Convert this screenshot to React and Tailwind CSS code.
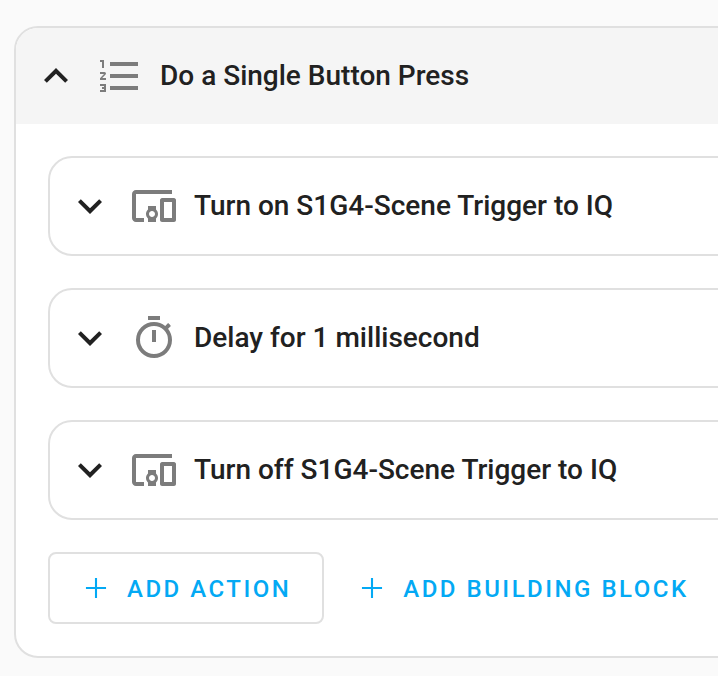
const paths = {
  listNumbered: 'M7,13V11H21V13H7M7,19V17H21V19H7M7,7V5H21V7H7M3,8V5H2V4H4V8H3M2,17V16H5V20H2V19H4V18.5H3V17.5H4V17H2M4.25,10A0.75,0.75 0 0,1 5,10.75C5,10.95 4.92,11.14 4.79,11.27L3.12,13H5V14H2V13.08L4,11H2V10H4.25Z',
  chevronUp: 'M7.41,15.41L12,10.83L16.59,15.41L18,14L12,8L6,14L7.41,15.41Z',
  chevronDown: 'M7.41,8.58L12,13.17L16.59,8.58L18,10L12,16L6,10L7.41,8.58Z',
  devices: 'M3 6H21V4H3C1.9 4 1 4.9 1 6V18C1 19.1 1.9 20 3 20H7V18H3V6M13 12H9V13.78C8.39 14.33 8 15.11 8 16C8 16.89 8.39 17.67 9 18.22V20H13V18.22C13.61 17.67 14 16.88 14 16S13.61 14.33 13 13.78V12M11 17.5C10.17 17.5 9.5 16.83 9.5 16S10.17 14.5 11 14.5 12.5 15.17 12.5 16 11.83 17.5 11 17.5M22 8H16C15.5 8 15 8.5 15 9V19C15 19.5 15.5 20 16 20H22C22.5 20 23 19.5 23 19V9C23 8.5 22.5 8 22 8M21 18H17V10H21V18Z',
  timer: 'M12,20A7,7 0 0,1 5,13A7,7 0 0,1 12,6A7,7 0 0,1 19,13A7,7 0 0,1 12,20M19.03,7.39L20.45,5.97C20,5.46 19.55,5 19.04,4.56L17.62,6C16.07,4.74 14.12,4 12,4A9,9 0 0,0 3,13A9,9 0 0,0 12,22C17,22 21,17.97 21,13C21,10.88 20.26,8.93 19.03,7.39M11,14H13V8H11M15,1H9V3H15V1Z',
  plus: 'M18.7,12.7H12.7V18.7H11.3V12.7H5.3V11.3H11.3V5.3H12.7V11.3H18.7V12.7Z',
};

function Icon({ d, className }) {
  return (
    <svg viewBox="0 0 24 24" className={className} fill="currentColor">
      <path d={d} />
    </svg>
  );
}

function ActionRow({ icon, label }) {
  return (
    <div className="flex h-[100px] items-center rounded-3xl border-2 border-[#e0e0e0] bg-white pl-4">
      <Icon d={paths.chevronDown} className="h-12 w-12 shrink-0 text-[#212121]" />
      <Icon d={icon} className="ml-4 h-12 w-12 shrink-0 text-[#7c7c7c]" />
      <span className="ml-4 text-[28px] font-medium text-[#212121]">{label}</span>
    </div>
  );
}

function AddButton({ label, outlined }) {
  return (
    <button
      type="button"
      className={`flex h-[72px] items-center rounded-lg pl-7 pr-[31px] ${outlined ? 'border-2 border-[#e0e0e0]' : 'border-2 border-transparent'}`}
    >
      <Icon d={paths.plus} className="h-9 w-9 shrink-0 text-[#03a9f4]" />
      <span className="ml-[13px] pt-[2px] text-[24px] font-medium tracking-[2.5px] text-[#03a9f4]">{label}</span>
    </button>
  );
}

export default function App() {
  return (
    <div className="h-[676px] w-[718px] overflow-hidden bg-[#fafafa] pl-[14px] pt-[26px] font-['Roboto',sans-serif]">
      <div className="w-[800px] overflow-hidden rounded-3xl border-2 border-[#e0e0e0] bg-white">
        <div className="flex h-24 items-center bg-[#f5f5f5] pl-4">
          <Icon d={paths.chevronUp} className="h-12 w-12 shrink-0 text-[#212121]" />
          <Icon d={paths.listNumbered} className="ml-4 h-12 w-12 shrink-0 text-[#7c7c7c]" />
          <span className="ml-4 text-[28px] font-medium text-[#212121]">Do a Single Button Press</span>
        </div>
        <div className="flex flex-col gap-8 pb-8 pl-8 pt-8">
          <ActionRow icon={paths.devices} label="Turn on S1G4-Scene Trigger to IQ" />
          <ActionRow icon={paths.timer} label="Delay for 1 millisecond" />
          <ActionRow icon={paths.devices} label="Turn off S1G4-Scene Trigger to IQ" />
          <div className="flex">
            <AddButton label="ADD ACTION" outlined />
            <AddButton label="ADD BUILDING BLOCK" />
          </div>
        </div>
      </div>
    </div>
  );
}
